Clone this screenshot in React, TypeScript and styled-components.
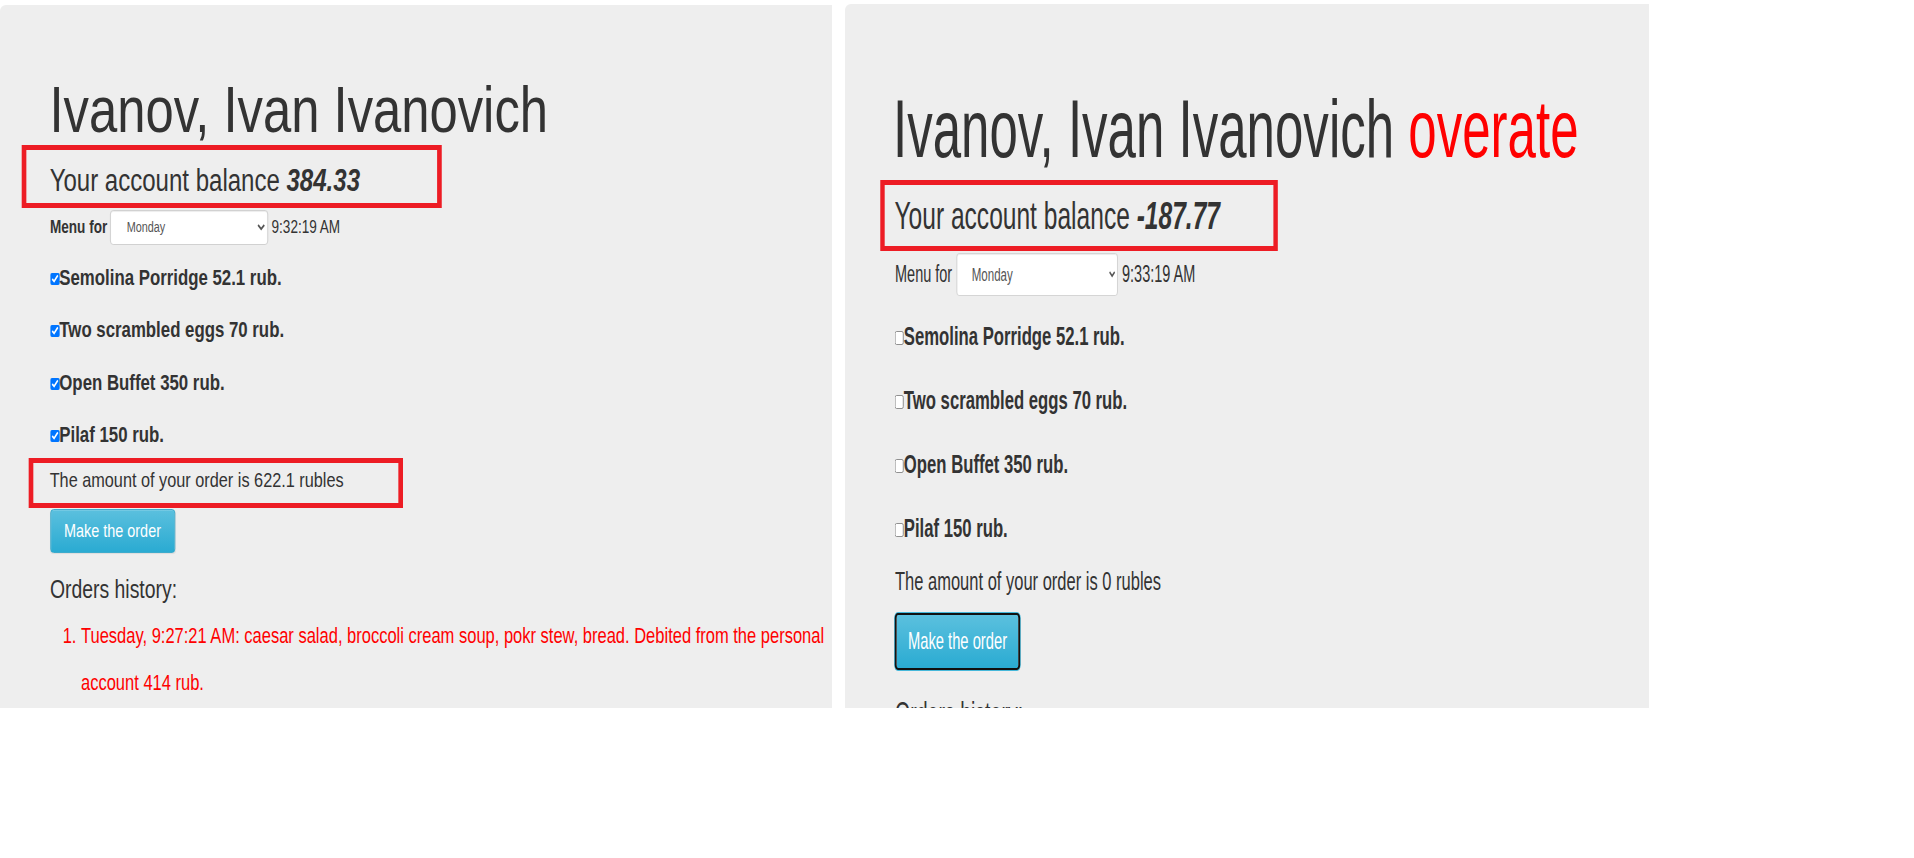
import React from "react";
import styled, { createGlobalStyle, css } from "styled-components";

const GlobalStyle = createGlobalStyle`
  html, body {
    margin: 0;
    padding: 0;
    background: #ffffff;
  }
  body {
    font-family: "Liberation Sans", Arial, Helvetica, sans-serif;
    color: #333333;
  }
`;

type Cfg = {
  sx: number;
  width: number;
  height: number;
  top: number;
  padTop: number;
  padLeft: number;
  titleSize: number;
  titleShift: number;
  overate: boolean;
  balance: string;
  boxMt: number;
  boxH: number;
  boxW: number;
  boxOut: number;
  balSize: number;
  balLh: number;
  balPt: number;
  menuMt: number;
  menuSize: number;
  menuGap: number;
  menuBold: boolean;
  time: string;
  selectW: number;
  selectH: number;
  selectFont: number;
  selectPl: number;
  dishesMt: number;
  dishSize: number;
  dishGap: number;
  tick: number;
  checked: boolean;
  amount: string;
  amountBoxed: boolean;
  amountMt: number;
  amountH: number;
  amountW: number;
  amountOut: number;
  amountSize: number;
  amountPt: number;
  btnMt: number;
  btnW: number;
  btnH: number;
  btnFont: number;
  focused: boolean;
  histMt: number;
  histSize: number;
  histLh: number;
  listMt: number;
  listSize: number;
  listLh: number;
  listPl: number;
};

const Page = styled.main`
  display: flex;
  align-items: flex-start;
  gap: 13px;
  width: 1914px;
  height: 858px;
  background: #ffffff;
  overflow: hidden;
`;

const Panel = styled.section<{ $w: number; $h: number; $top: number }>`
  flex: none;
  width: ${(p) => p.$w}px;
  height: ${(p) => p.$h}px;
  margin-top: ${(p) => p.$top}px;
  background: #eeeeee;
  border-radius: 6px 0 0 0;
  overflow: hidden;
`;

const Stage = styled.div<{ $sx: number; $w: number; $pt: number; $pl: number }>`
  box-sizing: border-box;
  width: ${(p) => p.$w / p.$sx}px;
  padding: ${(p) => p.$pt}px 0 0 ${(p) => p.$pl}px;
  transform: scaleX(${(p) => p.$sx});
  transform-origin: 0 0;
`;

const Title = styled.h1<{ $size: number; $shift: number }>`
  margin: 0 0 0 ${(p) => p.$shift}em;
  font-size: ${(p) => p.$size}px;
  line-height: 1;
  font-weight: 400;
  color: #333333;
  white-space: nowrap;
`;

const Alert = styled.span`
  color: #ff0000;
`;

const Highlight = styled.div<{ $mt: number; $w: number; $h: number; $out: number; $bh: number }>`
  box-sizing: border-box;
  width: ${(p) => p.$w}px;
  height: ${(p) => p.$h}px;
  margin: ${(p) => p.$mt}px 0 0 ${(p) => -p.$out}px;
  padding-left: ${(p) => p.$out - p.$bh}px;
  border-style: solid;
  border-color: #ed1c24;
  border-width: 5px ${(p) => p.$bh}px;
`;

const Balance = styled.p<{ $size: number; $lh: number; $pt: number }>`
  margin: 0;
  padding-top: ${(p) => p.$pt}px;
  font-size: ${(p) => p.$size}px;
  line-height: ${(p) => p.$lh}px;
  white-space: nowrap;

  b {
    font-weight: 700;
    font-style: italic;
  }
`;

const MenuRow = styled.div<{ $mt: number; $size: number; $gap: number }>`
  display: flex;
  align-items: center;
  gap: ${(p) => p.$gap}px;
  margin-top: ${(p) => p.$mt}px;
  font-size: ${(p) => p.$size}px;
  line-height: 1.15;
  white-space: nowrap;
`;

const MenuLabel = styled.label<{ $bold: boolean }>`
  font-weight: ${(p) => (p.$bold ? 700 : 400)};
`;

const DaySelect = styled.select<{ $w: number; $h: number; $font: number; $pl: number }>`
  box-sizing: border-box;
  width: ${(p) => p.$w}px;
  height: ${(p) => p.$h}px;
  padding: 0 0 0 ${(p) => p.$pl}px;
  font-family: "Liberation Sans", Arial, sans-serif;
  font-size: ${(p) => p.$font}px;
  color: #555555;
  background: #ffffff;
  border: 1px solid #cccccc;
  border-radius: 4px;
  box-shadow: inset 0 1px 1px rgba(0, 0, 0, 0.075);
`;

const Clock = styled.span``;

const Dishes = styled.div<{ $mt: number; $gap: number }>`
  display: flex;
  flex-direction: column;
  gap: ${(p) => p.$gap}px;
  margin-top: ${(p) => p.$mt}px;
`;

const Dish = styled.label<{ $size: number }>`
  display: block;
  font-size: ${(p) => p.$size}px;
  line-height: 40px;
  font-weight: 700;
  white-space: nowrap;
`;

const Tick = styled.input<{ $s: number }>`
  width: ${(p) => p.$s}px;
  height: ${(p) => p.$s}px;
  margin: 0;
  vertical-align: baseline;
`;

const Amount = styled.p<{ $size: number; $pt: number; $mt: number }>`
  margin: ${(p) => p.$mt}px 0 0;
  padding-top: ${(p) => p.$pt}px;
  font-size: ${(p) => p.$size}px;
  line-height: 32px;
  white-space: nowrap;
`;

const OrderButton = styled.button<{ $mt: number; $w: number; $h: number; $font: number; $focused: boolean; $bh: number }>`
  display: block;
  box-sizing: border-box;
  width: ${(p) => p.$w}px;
  height: ${(p) => p.$h}px;
  margin-top: ${(p) => p.$mt}px;
  padding: 0;
  font-family: "Liberation Sans", Arial, sans-serif;
  font-size: ${(p) => p.$font}px;
  line-height: 1;
  color: #ffffff;
  background-image: linear-gradient(to bottom, #5bc0de 0%, #2aabd2 100%);
  border: 1px solid #28a4c9;
  border-radius: 4px;
  box-shadow: inset 0 1px 0 rgba(255, 255, 255, 0.15), 0 1px 1px rgba(0, 0, 0, 0.075);
  cursor: pointer;

  ${(p) =>
    p.$focused &&
    css`
      border-color: #111111;
      border-width: 2px ${p.$bh}px;
      border-radius: 5px;
      box-shadow: 0 0 0 1px #46b8da;
    `}
`;

const HistoryTitle = styled.h4<{ $mt: number; $size: number; $lh: number }>`
  margin: ${(p) => p.$mt}px 0 0;
  font-size: ${(p) => p.$size}px;
  line-height: ${(p) => p.$lh}px;
  font-weight: 400;
  white-space: nowrap;
`;

const HistoryList = styled.ol<{ $mt: number; $size: number; $lh: number; $pl: number }>`
  margin: ${(p) => p.$mt}px 0 0;
  padding: 0 0 0 ${(p) => p.$pl}px;
  font-size: ${(p) => p.$size}px;
  line-height: ${(p) => p.$lh}px;
  color: #ff0000;
`;

const dishes = [
  "Semolina Porridge 52.1 rub.",
  "Two scrambled eggs 70 rub.",
  "Open Buffet 350 rub.",
  "Pilaf 150 rub.",
];

const days = ["Monday", "Tuesday", "Wednesday", "Thursday", "Friday"];

function OrderScreen({ c }: { c: Cfg }) {
  const bh = 5 / c.sx;
  const amount = (
    <Amount $size={c.amountSize} $pt={c.amountPt} $mt={c.amountBoxed ? 0 : c.amountMt}>
      The amount of your order is {c.amount} rubles
    </Amount>
  );
  return (
    <Panel $w={c.width} $h={c.height} $top={c.top}>
      <Stage $sx={c.sx} $w={c.width} $pt={c.padTop} $pl={c.padLeft}>
        <Title $size={c.titleSize} $shift={c.titleShift}>
          Ivanov, Ivan Ivanovich{c.overate && <> <Alert>overate</Alert></>}
        </Title>
        <Highlight $mt={c.boxMt} $w={c.boxW} $h={c.boxH} $out={c.boxOut} $bh={bh}>
          <Balance $size={c.balSize} $lh={c.balLh} $pt={c.balPt}>
            Your account balance <b>{c.balance}</b>
          </Balance>
        </Highlight>
        <MenuRow $mt={c.menuMt} $size={c.menuSize} $gap={c.menuGap}>
          <MenuLabel $bold={c.menuBold}>Menu for</MenuLabel>
          <DaySelect
            $w={c.selectW}
            $h={c.selectH}
            $font={c.selectFont}
            $pl={c.selectPl}
            defaultValue="Monday"
          >
            {days.map((d) => (
              <option key={d} value={d}>
                {d}
              </option>
            ))}
          </DaySelect>
          <Clock>{c.time}</Clock>
        </MenuRow>
        <Dishes $mt={c.dishesMt} $gap={c.dishGap}>
          {dishes.map((d) => (
            <Dish key={d} $size={c.dishSize}>
              <Tick type="checkbox" $s={c.tick} defaultChecked={c.checked} />
              {d}
            </Dish>
          ))}
        </Dishes>
        {c.amountBoxed ? (
          <Highlight $mt={c.amountMt} $w={c.amountW} $h={c.amountH} $out={c.amountOut} $bh={bh}>
            {amount}
          </Highlight>
        ) : (
          amount
        )}
        <OrderButton
          type="button"
          $mt={c.btnMt}
          $w={c.btnW}
          $h={c.btnH}
          $font={c.btnFont}
          $focused={c.focused}
          $bh={2 / c.sx}
        >
          Make the order
        </OrderButton>
        <HistoryTitle $mt={c.histMt} $size={c.histSize} $lh={c.histLh}>
          Orders history:
        </HistoryTitle>
        <HistoryList $mt={c.listMt} $size={c.listSize} $lh={c.listLh} $pl={c.listPl}>
          <li>
            Tuesday, 9:27:21 AM: caesar salad, broccoli cream soup, pokr stew, bread. Debited from the
            personal account 414 rub.
          </li>
        </HistoryList>
      </Stage>
    </Panel>
  );
}

const left: Cfg = {
  sx: 0.775,
  width: 832,
  height: 703,
  top: 5,
  padTop: 72,
  padLeft: 64.5,
  titleSize: 65.5,
  titleShift: -0.01,
  overate: false,
  balance: "384.33",
  boxMt: 2,
  boxH: 63,
  boxW: 541.9,
  boxOut: 36.1,
  balSize: 31,
  balLh: 40,
  balPt: 11,
  menuMt: 2,
  menuSize: 17.5,
  menuGap: 4,
  menuBold: true,
  time: "9:32:19 AM",
  selectW: 204,
  selectH: 35,
  selectFont: 14,
  selectPl: 16,
  dishesMt: 13.5,
  dishSize: 21.7,
  dishGap: 12.33,
  tick: 12,
  checked: true,
  amount: "622.1",
  amountBoxed: true,
  amountMt: 3.5,
  amountH: 50,
  amountW: 482.6,
  amountOut: 27.1,
  amountSize: 21,
  amountPt: 1,
  btnMt: 1,
  btnW: 161.3,
  btnH: 44,
  btnFont: 18.6,
  focused: false,
  histMt: 20.3,
  histSize: 25,
  histLh: 30,
  listMt: 8.9,
  listSize: 21.3,
  listLh: 47,
  listPl: 40,
};

const right: Cfg = {
  sx: 0.63,
  width: 804,
  height: 704,
  top: 4,
  padTop: 85.4,
  padLeft: 79.4,
  titleSize: 81,
  titleShift: -0.04,
  overate: true,
  balance: "-187.77",
  boxMt: 9.6,
  boxH: 71,
  boxW: 631.7,
  boxOut: 23.8,
  balSize: 39,
  balLh: 48,
  balPt: 7.5,
  menuMt: 2,
  menuSize: 23,
  menuGap: 7,
  menuBold: false,
  time: "9:33:19 AM",
  selectW: 255.5,
  selectH: 43,
  selectFont: 18.3,
  selectPl: 19,
  dishesMt: 19.8,
  dishSize: 26.5,
  dishGap: 24,
  tick: 14,
  checked: false,
  amount: "0",
  amountBoxed: false,
  amountMt: 17.1,
  amountH: 0,
  amountW: 0,
  amountOut: 0,
  amountSize: 26.2,
  amountPt: 0,
  btnMt: 16.1,
  btnW: 198.4,
  btnH: 57,
  btnFont: 23.4,
  focused: true,
  histMt: 25.3,
  histSize: 31,
  histLh: 38,
  listMt: 11,
  listSize: 26,
  listLh: 58,
  listPl: 50,
};

export default function App() {
  return (
    <>
      <GlobalStyle />
      <Page>
        <OrderScreen c={left} />
        <OrderScreen c={right} />
      </Page>
    </>
  );
}
